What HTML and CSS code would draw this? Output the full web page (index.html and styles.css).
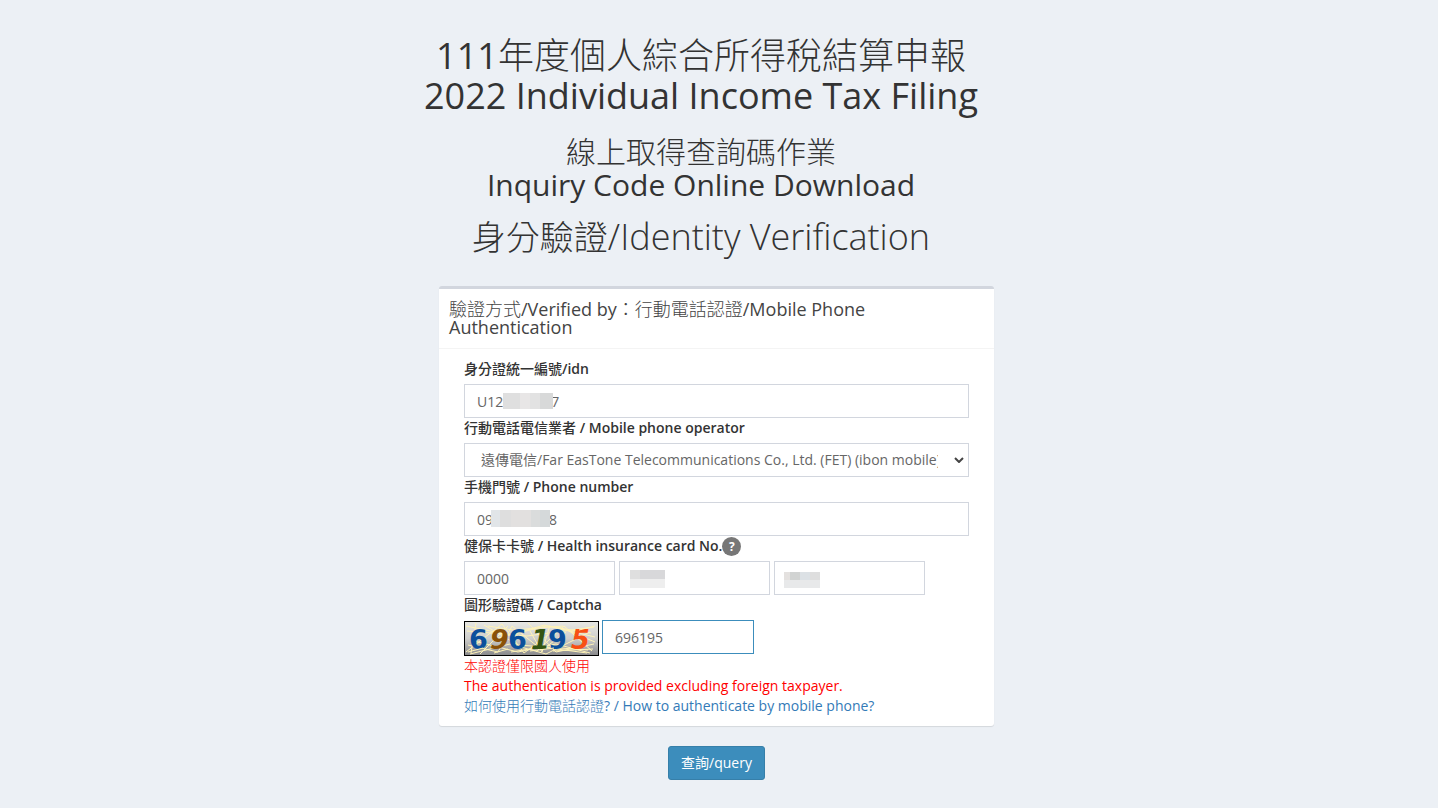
FILE: index.html
```html
<!DOCTYPE html>
<html lang="zh-Hant">
<head>
<meta charset="utf-8">
<title>線上取得查詢碼作業</title>
<link rel="stylesheet" href="styles.css">
</head>
<body>
<header class="page-head">
  <h1 class="title">111<span class="zh">年度個人綜合所得稅結算申報</span><br>2022 Individual Income Tax Filing</h1>
  <h2 class="subtitle"><span class="zh">線上取得查詢碼作業</span><br>Inquiry Code Online Download</h2>
  <p class="step"><span class="step-zh">身分驗證</span>/Identity Verification</p>
</header>
<main class="content">
  <form class="form">
    <section class="box">
      <div class="box-header">
        <h3 class="box-title"><span class="zh">驗證方式</span>/Verified by<span class="zh">：行動電話認證</span>/Mobile Phone Authentication</h3>
      </div>
      <div class="box-body">
        <label class="label" for="idn"><span class="label-zh">身分證統一編號</span>/idn</label>
        <div class="field">
          <input class="control" id="idn" type="text" value="U12&#x2007;&#x2007;&#x2007;&#x2007;&#x2007;&#x2007;7">
          <span class="mask mask-idn"></span>
        </div>
        <label class="label" for="operator"><span class="label-zh">行動電話電信業者</span> / Mobile phone operator</label>
        <div class="field">
          <select class="control select" id="operator">
            <option>遠傳電信/Far EasTone Telecommunications Co., Ltd. (FET) (ibon mobile)</option>
          </select>
          <svg class="chevron" viewBox="0 0 10 6" aria-hidden="true"><path d="M1 1l4 4 4-4" fill="none" stroke="#444" stroke-width="2"/></svg>
        </div>
        <label class="label" for="phone"><span class="label-zh">手機門號</span> / Phone number</label>
        <div class="field">
          <input class="control" id="phone" type="text" value="09&#x2007;&#x2007;&#x2007;&#x2007;&#x2007;&#x2007;&#x2007;8">
          <span class="mask mask-phone"></span>
        </div>
        <div class="label-row">
          <label class="label" for="card1"><span class="label-zh">健保卡卡號</span> / Health insurance card No.</label>
          <button class="help" type="button">?</button>
        </div>
        <div class="card-row">
          <div class="field part"><input class="control" id="card1" type="text" value="0000"></div>
          <div class="field part"><input class="control" type="text" aria-label="Card number part 2"><span class="mask mask-card2"></span></div>
          <div class="field part"><input class="control" type="text" aria-label="Card number part 3"><span class="mask mask-card3"></span></div>
        </div>
        <label class="label" for="captcha"><span class="label-zh">圖形驗證碼</span> / Captcha</label>
        <div class="captcha-row">
          <svg class="captcha" viewBox="0 0 135 35" role="img" aria-label="Captcha">
            <defs><linearGradient id="g" x1="0" y1="0" x2="0" y2="1"><stop offset="0" stop-color="#e8e8e4"/><stop offset="0.5" stop-color="#cfcfcc"/><stop offset="1" stop-color="#858588"/></linearGradient></defs>
            <rect width="135" height="35" fill="url(#g)"/>
            <g fill="none" stroke="#fff3b8" stroke-width="1">
              <path d="M2 31L38 3l22 29L95 6l36 15M3 10l60 5 67-9M6 33l40-10 36 10 44-22M20 4l34 20 70 5M12 2l-5 30M44 5L16 33M64 2l28 29 38-8M72 31l28-26 28 25M30 18l52-13 45 7"/>
              <path d="M4 24l30 7 14-26 30 24 24-18M2 5l44 9 34-10 51 12M10 20l44 11 38-8 34 9M66 10l12 21 8-27M24 5l25 4 50-4M47 31l31-5 45 6"/>
            </g>
            <g font-family="DejaVu Sans" font-weight="bold" font-size="27">
              <text x="5" y="28" fill="#0b4f9c">6</text>
              <text x="26" y="28" fill="#8a5208" font-style="italic">9</text>
              <text x="44" y="28" fill="#0b4f9c">6</text>
              <text x="67" y="28" fill="#345512" font-style="italic">1</text>
              <text x="84" y="28" fill="#0b4f9c">9</text>
              <text x="107" y="28" fill="#f84f12" font-style="italic">5</text>
            </g>
            <path d="M4 31l15-4M30 32l14-4M66 30l24-3M89 30l40-2M115 9l16-4" fill="none" stroke="#fff3b8"/>
            <rect x="0.5" y="0.5" width="134" height="34" fill="none" stroke="#000"/>
          </svg>
          <input class="control captcha-input" id="captcha" type="text" value="696195">
        </div>
        <p class="notice"><span class="zh">本認證僅限國人使用</span><br>The authentication is provided excluding foreign taxpayer.</p>
        <a class="link" href="#"><span class="zh">如何使用行動電話認證</span>? / How to authenticate by mobile phone?</a>
      </div>
    </section>
    <button class="submit" type="submit">查詢/query</button>
  </form>
</main>
</body>
</html>
```
FILE: styles.css
```css
* { box-sizing: border-box; }
body {
  margin: 0;
  background: #ecf0f5;
  color: #333;
  font: 400 14px/20px "Open Sans", "Noto Sans CJK TC", sans-serif;
}
h1, h2, h3, p { margin: 0; }
.zh { font-weight: 300; }
.page-head {
  padding: 36px 36px 0 0;
  text-align: center;
}
.title { font-size: 36px; line-height: 40px; font-weight: 400; }
.subtitle { margin-top: 19px; font-size: 30px; line-height: 33px; font-weight: 400; }
.step { margin-top: 16px; font-size: 36px; line-height: 40px; font-weight: 300; }
.step-zh { font-size: 34px; }
.content { padding: 29px 5px 28px 0; }
.form {
  display: flex;
  flex-direction: column;
  align-items: center;
  gap: 20px;
  max-width: 555px;
  margin: 0 auto;
}
.box {
  width: 100%;
  background: #fff;
  border-top: 3px solid #d2d6de;
  border-radius: 3px;
  box-shadow: 0 1px 1px rgba(0, 0, 0, .1);
}
.box-header { padding: 11px 10px 12px; border-bottom: 1px solid #f4f4f4; }
.box-title { font-size: 18px; line-height: 18px; font-weight: 400; color: #444; }
.box-body { padding: 10px 25px; }
.label { display: block; height: 25px; font-weight: 600; }
.label-zh { font-weight: 500; }
.label-row { display: flex; }
.help {
  width: 19px;
  height: 19px;
  margin-top: 1px;
  padding: 0;
  border: 0;
  border-radius: 50%;
  background: #777;
  color: #fff;
  font: bold 12px/19px "Open Sans", sans-serif;
}
.field { position: relative; }
.control {
  display: block;
  width: 100%;
  height: 34px;
  padding: 6px 12px;
  border: 1px solid #d2d6de;
  border-radius: 0;
  background: #fff;
  color: #666;
  font: inherit;
  outline: 0;
}
.select { appearance: none; padding: 6px 30px 6px 16px; }
.chevron { position: absolute; right: 5px; top: 14px; width: 10px; height: 6px; }
.card-row { display: flex; gap: 4px; }
.part { width: 151px; }
.captcha-row { display: flex; gap: 3px; height: 36px; }
.captcha { width: 135px; height: 35px; margin-top: 1px; }
.captcha-input { width: 152px; border-color: #3c8dbc; }
.mask { position: absolute; height: 16px; }
.mask-idn {
  left: 39px; top: 9px; width: 50px;
  background: linear-gradient(90deg, #dfdfdf 0 17px, #e8e6e6 17px 27px, #e2e2e2 27px 37px, #d8d9d9 37px);
}
.mask-phone {
  left: 27px; top: 8px; width: 59px; height: 17px;
  background: linear-gradient(90deg, #e1e5e8 0 9px, #dedede 9px 20px, #e2e0df 20px 40px, #dadcdc 40px 49px, #d5d9da 49px);
}
.mask-card2 {
  left: 11px; top: 9px; width: 35px; height: 18px;
  background: linear-gradient(transparent 50%, #eee 50%), linear-gradient(90deg, #dfdfdf 10px, #d8d8da 10px);
}
.mask-card3 {
  left: 10px; top: 11px; width: 36px;
  background: linear-gradient(transparent 50%, #e8e9ea 50%), linear-gradient(90deg, #e4e1df 6px, #d1d3d2 6px 16px, #dce1e5 16px 26px, #dedede 26px);
}
.notice { color: #f00; }
.link { display: block; color: #337ab7; text-decoration: none; }
.submit {
  height: 34px;
  padding: 6px 12px;
  border: 1px solid #367fa9;
  border-radius: 3px;
  background: #3c8dbc;
  color: #fff;
  font: inherit;
}
```
